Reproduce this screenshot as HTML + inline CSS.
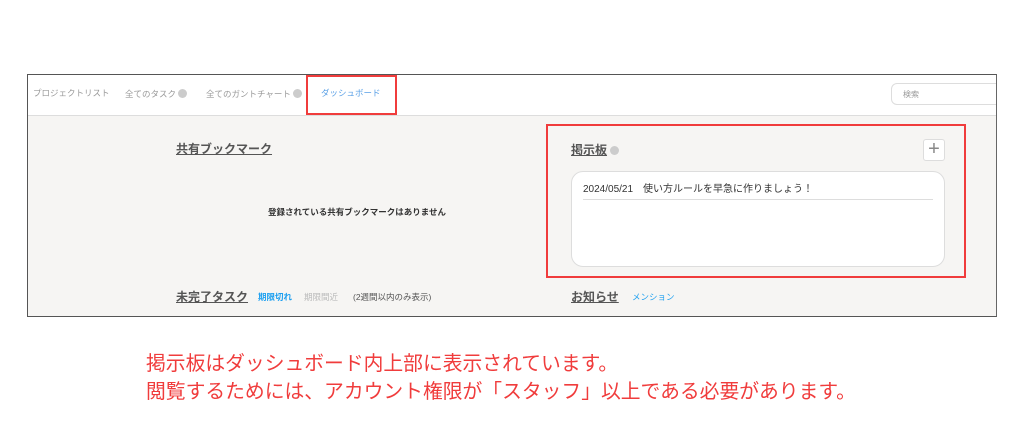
<!DOCTYPE html>
<html><head><meta charset="utf-8"><style>
*{margin:0;padding:0;box-sizing:border-box}
body{width:1024px;height:442px;background:#fff;position:relative;font-family:"Liberation Sans","Noto Sans CJK JP",sans-serif;overflow:hidden}
.a{position:absolute;white-space:nowrap;line-height:1}
.frame{position:absolute;left:27px;top:74px;width:970px;height:243px;border:1px solid #555;border-right:1px solid #666;background:#f6f5f3;overflow:hidden}
.hdr{position:absolute;left:0;top:0;width:100%;height:41px;background:#fff;border-bottom:1px solid #ddd}
.nav{font-size:8.5px;color:#999;top:14px}
.q{display:inline-block;width:9px;height:9px;border-radius:50%;background:#ccc;vertical-align:-1px;margin-left:2px}
.h{font-size:12px;font-weight:bold;color:#555;text-decoration:underline}
.red{position:absolute;border:2px solid #f03c3c}
</style></head><body>
<div class="frame">
 <div class="hdr"></div>
 <div class="a nav" style="left:5px">プロジェクトリスト</div>
 <div class="a nav" style="left:97px">全てのタスク<span class="q"></span></div>
 <div class="a nav" style="left:178px">全てのガントチャート<span class="q"></span></div>
 <div class="a nav" style="left:293px;color:#5aa0e6">ダッシュボード</div>
 <div class="a" style="left:863px;top:8px;width:120px;height:22px;border:1px solid #ddd;border-radius:6px;background:#fff;font-size:8px;color:#999;padding:7px 11px">検索</div>
 <div class="a h" style="left:148px;top:68px">共有ブックマーク</div>
 <div class="a" style="left:240px;top:133px;font-size:8.5px;font-weight:bold;color:#333">登録されている共有ブックマークはありません</div>
 <div class="a h" style="left:148px;top:216px">未完了タスク</div>
 <div class="a" style="left:230px;top:218px;font-size:8.5px;font-weight:bold;color:#1ea0f0">期限切れ</div>
 <div class="a" style="left:276px;top:218px;font-size:8.5px;color:#bbb">期限間近</div>
 <div class="a" style="left:325px;top:218px;font-size:8.5px;color:#555">(2週間以内のみ表示)</div>
 <div class="a h" style="left:543px;top:69px">掲示板<span class="q" style="margin-left:3px"></span></div>
 <div class="a" style="left:895px;top:64px;width:22px;height:22px;border:1px solid #ddd;border-radius:3px;background:#fff;color:#888;font-size:20px;line-height:19px;text-align:center">+</div>
 <div class="a" style="left:543px;top:96px;width:374px;height:96px;background:#fff;border:1px solid #ddd;border-radius:12px"></div>
 <div class="a" style="left:555px;top:110px;font-size:10px;color:#333">2024/05/21　使い方ルールを早急に作りましょう！</div>
 <div class="a" style="left:555px;top:124px;width:350px;height:1px;background:#ddd"></div>
 <div class="a h" style="left:543px;top:216px">お知らせ</div>
 <div class="a" style="left:604px;top:218px;font-size:8.5px;color:#1ea0f0">メンション</div>
</div>
<div class="red" style="left:306px;top:75px;width:91px;height:40px"></div>
<div class="red" style="left:546px;top:124px;width:420px;height:154px"></div>
<div class="a" style="left:146px;top:350px;font-size:19.8px;line-height:28px;color:#f03c3c">掲示板はダッシュボード内上部に表示されています。<br>閲覧するためには、アカウント権限が「スタッフ」以上である必要があります。</div>
</body></html>
